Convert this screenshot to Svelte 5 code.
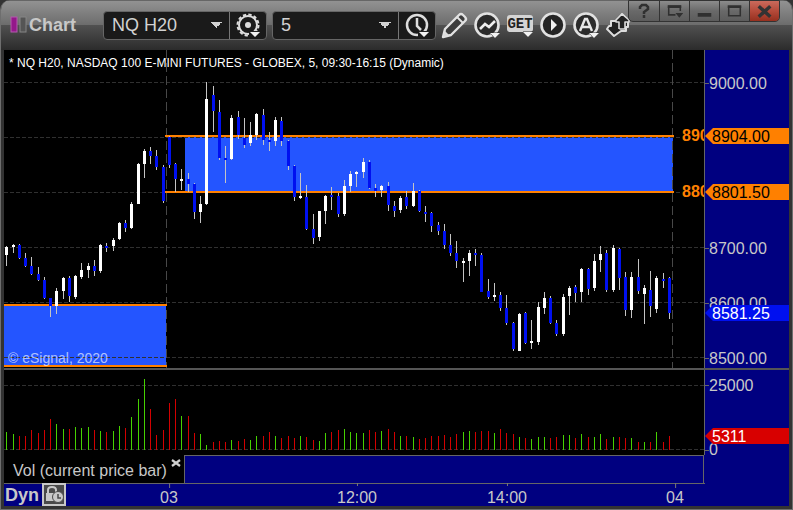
<script lang="ts">
    let symbol = $state("NQ H20");
    let interval = $state("5");
    let showVolume = $state(true);

    // high, low, body top, body bottom, closed up, volume
    const bars = [
        [246, 266, 247, 255, 1, 18], [244, 253, 245, 247, 1, 16], [244, 259, 245, 258, 0, 14],
        [253, 267, 258, 266, 0, 14], [257, 275, 266, 274, 0, 20], [267, 281, 274, 280, 0, 17],
        [277, 299, 280, 298, 0, 20], [298, 317, 298, 306, 0, 31], [288, 314, 291, 306, 1, 26],
        [277, 299, 278, 291, 1, 21], [276, 302, 278, 296, 0, 21], [275, 299, 276, 297, 1, 23],
        [263, 279, 270, 277, 1, 22], [263, 278, 266, 270, 1, 23], [260, 276, 266, 271, 0, 20],
        [244, 273, 245, 271, 1, 19], [243, 252, 246, 248, 0, 18], [238, 251, 240, 246, 1, 19],
        [222, 240, 223, 239, 1, 24], [220, 232, 223, 228, 0, 22], [202, 229, 204, 228, 1, 33],
        [163, 204, 164, 204, 1, 51], [149, 178, 151, 164, 1, 71], [147, 164, 151, 156, 0, 41],
        [150, 170, 156, 167, 0, 15], [165, 203, 167, 201, 0, 20], [136, 168, 137, 165, 0, 47],
        [163, 192, 164, 179, 0, 51], [169, 190, 179, 181, 1, 34], [173, 192, 179, 184, 0, 34],
        [183, 219, 184, 212, 0, 17], [196, 223, 204, 212, 1, 16], [82, 205, 99, 204, 1, 5],
        [86, 132, 95, 111, 0, 8], [100, 160, 112, 158, 0, 9], [146, 183, 158, 160, 0, 8],
        [115, 160, 118, 159, 1, 10], [111, 139, 117, 135, 0, 9], [118, 148, 138, 145, 0, 11],
        [122, 146, 135, 143, 1, 10], [113, 140, 114, 135, 1, 14], [109, 145, 115, 140, 0, 14],
        [132, 151, 140, 142, 0, 18], [117, 146, 120, 141, 1, 14], [117, 146, 121, 141, 0, 12],
        [140, 170, 141, 166, 0, 14], [165, 201, 166, 197, 0, 12], [173, 199, 196, 198, 1, 14],
        [185, 230, 197, 229, 0, 13], [214, 244, 229, 238, 0, 10], [211, 241, 211, 237, 1, 9],
        [195, 224, 196, 211, 1, 17], [187, 210, 195, 197, 0, 18], [193, 217, 196, 214, 0, 20],
        [180, 216, 186, 214, 1, 21], [171, 192, 174, 186, 1, 18], [171, 187, 172, 174, 1, 17],
        [158, 178, 162, 172, 1, 17], [160, 189, 162, 188, 0, 20], [184, 197, 188, 191, 0, 18],
        [185, 197, 186, 190, 1, 19], [182, 211, 186, 205, 0, 21], [201, 217, 206, 211, 0, 18],
        [196, 213, 198, 210, 1, 14], [191, 209, 197, 206, 0, 14], [183, 207, 191, 206, 1, 13],
        [190, 212, 191, 211, 0, 11], [206, 222, 212, 214, 0, 12], [212, 232, 213, 226, 0, 14],
        [222, 235, 225, 231, 0, 14], [224, 249, 231, 245, 0, 15], [234, 256, 245, 253, 0, 13],
        [241, 268, 253, 261, 0, 16], [258, 282, 261, 263, 1, 18], [250, 276, 253, 261, 1, 19],
        [249, 266, 253, 255, 0, 18], [253, 292, 255, 292, 0, 19], [279, 299, 291, 297, 0, 19],
        [283, 301, 295, 297, 1, 17], [292, 311, 295, 308, 0, 21], [295, 325, 308, 323, 0, 17],
        [322, 351, 323, 349, 0, 16], [313, 351, 314, 351, 1, 13], [312, 344, 313, 343, 0, 12],
        [320, 349, 341, 343, 1, 11], [302, 345, 307, 342, 1, 13], [292, 314, 298, 308, 1, 13],
        [296, 324, 298, 323, 0, 12], [320, 336, 323, 334, 0, 13], [294, 336, 297, 334, 1, 15],
        [286, 315, 288, 296, 1, 15], [285, 302, 287, 293, 0, 12], [268, 302, 269, 292, 1, 16],
        [268, 295, 269, 289, 0, 13], [254, 291, 261, 288, 1, 13], [246, 272, 254, 260, 1, 16],
        [250, 292, 253, 290, 0, 11], [245, 292, 248, 290, 1, 13], [248, 290, 249, 278, 0, 13],
        [272, 316, 277, 310, 0, 12], [272, 318, 277, 310, 1, 12], [259, 294, 277, 291, 0, 8],
        [285, 324, 288, 294, 1, 8], [271, 317, 290, 306, 0, 8], [276, 313, 278, 309, 1, 18],
        [273, 288, 279, 281, 0, 8], [277, 319, 278, 313, 0, 14],
    ].map(([high, low, top, bottom, up, volume], i) => ({
        x: Math.floor(6.75 + i * 6.25),
        high, low, top, bottom, up: up === 1, volume,
    }));

    const gridRows = [82, 137, 192, 247, 302, 357];
    const sessions = [166, 672];
    const prices = [
        { y: 82, text: "9000.00" },
        { y: 247, text: "8700.00" },
        { y: 302, text: "8600.00" },
        { y: 357, text: "8500.00" },
    ];
    const flags = [
        { y: 128, text: "8904.00", kind: "level" },
        { y: 184, text: "8801.50", kind: "level" },
        { y: 305, text: "8581.25", kind: "last" },
    ];
    const times = [
        { at: 165, text: "03", day: true },
        { at: 353, text: "12:00", day: false },
        { at: 503, text: "14:00", day: false },
        { at: 671, text: "04", day: true },
    ];
</script>

{#snippet flag(y: number, text: string, kind: string)}
    <path class="flag {kind}" d="M0 {y + 8}L8 {y}H84V{y + 16}H8Z" />
    <text class="flag-text {kind}" x="7" y={y + 14}>{text}</text>
{/snippet}

{#snippet drop(x: number, y: number)}
    <path d="M{x} {y}h10l-5 5z" fill="#f2f2f2" stroke="#2a2a2a" stroke-width="1" paint-order="stroke" />
{/snippet}

<main class="window">
    <header>
        <div class="brand">
            <svg width="17" height="18" viewBox="0 0 17 18">
                <rect x="1" y="1" width="6" height="15" fill="#94188a" stroke="#b45aae" />
                <rect x="10" y="1" width="6" height="15" fill="#555" stroke="#858585" />
            </svg>
            <h1>Chart</h1>
        </div>

        <div class="combo">
            <select aria-label="Symbol" bind:value={symbol}>
                <option>NQ H20</option>
                <option>ES H20</option>
            </select>
            <button aria-label="Symbol settings">
                <svg width="36" height="26" viewBox="0 0 36 26">
                    <circle cx="18" cy="13" r="9" fill="none" stroke="#ddd" stroke-width="2" />
                    <circle cx="18" cy="13" r="10.5" fill="none" stroke="#ddd" stroke-width="2" stroke-dasharray="3.3 2.2" />
                    <circle cx="18" cy="13" r="3" fill="#ddd" />
                    <path d="M19 19h11v7H19z" fill="#1a1a1a" />
                    {@render drop(20, 20)}
                </svg>
            </button>
        </div>

        <div class="combo">
            <select aria-label="Interval" bind:value={interval}>
                <option>5</option>
                <option>15</option>
            </select>
            <button aria-label="Time template">
                <svg width="36" height="26" viewBox="0 0 36 26">
                    <circle cx="18" cy="13" r="10" fill="none" stroke="#ddd" stroke-width="2.5" />
                    <path d="M18 6v8l4 4" fill="none" stroke="#ddd" stroke-width="2.5" />
                    <path d="M19 19h11v7H19z" fill="#1a1a1a" />
                    {@render drop(20, 20)}
                </svg>
            </button>
        </div>

        <nav class="tools" aria-label="Chart tools">
            <button aria-label="Line tools">
                <svg width="33" height="30" viewBox="0 0 33 30">
                    <path d="M5 27l2-8L21 5q2-2 4 0l2 2q2 2 0 4L13 25z" fill="#3c3c3c" stroke="#e2e2e2" stroke-width="2.4" stroke-linejoin="round" />
                    <path d="M19 7l6 6" stroke="#e2e2e2" stroke-width="2" />
                    <path d="M7 21l4 4-6 2z" fill="#ddd" />
                </svg>
            </button>
            <button aria-label="Studies">
                <svg width="33" height="30" viewBox="0 0 33 30">
                    <circle cx="16" cy="15" r="11.5" fill="#2b2b2b" stroke="#e2e2e2" stroke-width="2.6" />
                    <path d="M9 19l5-5 4 3 6-6" fill="none" stroke="#eee" stroke-width="2.6" />
                    {@render drop(19, 23)}
                </svg>
            </button>
            <button aria-label="Get studies">
                <svg width="33" height="30" viewBox="0 0 33 30">
                    <rect x="3" y="5" width="26" height="17" rx="3" fill="#d4d4d4" />
                    <text x="16" y="18" text-anchor="middle" class="get">GET</text>
                    {@render drop(19, 22)}
                </svg>
            </button>
            <button aria-label="Playback">
                <svg width="33" height="30" viewBox="0 0 33 30">
                    <circle cx="16" cy="15" r="11.5" fill="#252525" stroke="#e2e2e2" stroke-width="2.6" />
                    <path d="M14 9l6 6-6 6z" fill="#f2f2f2" />
                </svg>
            </button>
            <button aria-label="Alerts">
                <svg width="33" height="30" viewBox="0 0 33 30">
                    <circle cx="16" cy="15" r="11.5" fill="#2b2b2b" stroke="#e2e2e2" stroke-width="2.6" />
                    <path d="M10 21L15 9h2l5 12M12 17h8" fill="none" stroke="#e8e8e8" stroke-width="2.4" />
                    {@render drop(19, 23)}
                </svg>
            </button>
            <button aria-label="Link">
                <svg width="33" height="30" viewBox="0 0 33 30">
                    <g fill="#222" stroke="#dcdcdc" stroke-width="2" stroke-linejoin="round">
                        <path d="M11 26l-7-7 2-3h2v-5h6l5-7 6 6v7h-2v4h-5z" />
                        <path d="M19 4l-6 6v2h3v7h6v-7h4v-2z" stroke-width="1.6" />
                    </g>
                    <path d="M9 13h4v6h4l-6 5-5-6h3z" fill="#222" />
                </svg>
            </button>
        </nav>

        <div class="controls">
            <button aria-label="Help"><svg width="30" height="20" viewBox="0 0 30 20">
                <path d="M11 8V6l2-2h4l2 2v2l-4 3v2M15 14v3" fill="none" stroke="#303030" stroke-width="2.5" />
            </svg></button>
            <button aria-label="Window menu"><svg width="30" height="20" viewBox="0 0 30 20">
                <path d="M16 14H9V5h12v5" fill="none" stroke="#303030" stroke-width="1.6" />
                <path d="M8 4h14v3H8zM16 12h8l-4 5z" fill="#303030" />
            </svg></button>
            <button aria-label="Minimize"><svg width="30" height="20" viewBox="0 0 30 20">
                <path d="M8 12h14v4H8z" fill="#303030" />
            </svg></button>
            <button aria-label="Maximize"><svg width="30" height="20" viewBox="0 0 30 20">
                <path d="M9 6h12v9H9z" fill="none" stroke="#303030" stroke-width="1.6" />
                <path d="M8 4h14v3H8z" fill="#303030" />
            </svg></button>
            <button class="close" aria-label="Close"><svg width="30" height="20" viewBox="0 0 30 20">
                <path d="M9 5l12 11M21 5L9 16" fill="none" stroke="#333" stroke-width="3.6" />
            </svg></button>
        </div>
    </header>

    <section class="pane">
        <div class="plot">
            <svg height="318" viewBox="4 50 700 318" preserveAspectRatio="none" shape-rendering="crispEdges">
                <rect x="185" y="137" width="488" height="54" fill="#2455ff" />
                <rect x="4" y="306" width="162" height="59" fill="#2455ff" />
                {#each gridRows as y}
                    <path class="grid" d="M4 {y + 0.5}H704" />
                {/each}
                {#each sessions as x}
                    <path class="session" d="M{x + 0.5} 50V368" />
                {/each}
                <path fill="#ff8000" d="M165 135h509v2H165zM165 191h509v2H165zM4 304h163v2H4zM4 365h163v2H4z" />
                {#each bars as bar}
                    <rect x={bar.x} y={bar.high} width="1" height={bar.low - bar.high} fill="#c4c4c4" />
                    <rect x={bar.x - 1} y={bar.top} width="3" height={bar.bottom - bar.top} fill={bar.up ? "#fff" : "#0010f0"} />
                {/each}
            </svg>
            <p class="caption">* NQ H20, NASDAQ 100 E-MINI FUTURES - GLOBEX, 5, 09:30-16:15 (Dynamic)</p>
            <span class="level-name upper">8904.00</span>
            <span class="level-name lower">8801.50</span>
            <small>© eSignal, 2020</small>
        </div>
        <svg class="axis" width="84" height="318" viewBox="0 50 84 318">
            {#each prices as price}
                <path d="M0 {price.y + 1.5}h4" stroke="#666" />
                <text x="4" y={price.y + 7}>{price.text}</text>
            {/each}
            {#each flags as f}
                {@render flag(f.y, f.text, f.kind)}
            {/each}
        </svg>
    </section>

    <section class="pane volume">
        <div class="plot">
            <svg height="85" viewBox="4 370 700 85" preserveAspectRatio="none" shape-rendering="crispEdges">
                <path class="grid" d="M4 385.5H704M4 449.5H704" />
                {#if showVolume}
                    {#each bars as bar}
                        <rect x={bar.x} y={450 - bar.volume} width="1" height={bar.volume} fill={bar.up ? "#46d200" : "#d20000"} />
                    {/each}
                {/if}
            </svg>
        </div>
        <svg class="axis" width="84" height="85" viewBox="0 370 84 85">
            <path d="M0 385.5h4M0 450.5h4" stroke="#666" />
            <text x="4" y="391">25000</text>
            <text x="4" y="455">0</text>
            {@render flag(428, "5311", "sold")}
        </svg>
    </section>

    <div class="tabs">
        <div class="tab">
            <span>Vol (current price bar)</span>
            <button aria-label="Remove volume" onclick={() => (showVolume = false)}>
                <svg width="10" height="8" viewBox="0 0 10 8">
                    <path d="M1 1l8 6M9 1L1 7" stroke="#d0d0d0" stroke-width="2.2" />
                </svg>
            </button>
        </div>
        <div class="tab-rest"></div>
    </div>

    <footer>
        <strong>Dyn</strong>
        <button aria-label="Lock time range">
            <svg width="20" height="19" viewBox="0 0 20 19">
                <path d="M4 9V5q0-3 4-3t4 3v3" fill="none" stroke="#c8c8c8" stroke-width="2" />
                <path d="M2 8h10v8H2z" fill="#c8c8c8" />
                <circle cx="14" cy="12" r="5.5" fill="#c8c8c8" stroke="#4a4a4a" />
                <path d="M14 9v4h3" fill="none" stroke="#4a4a4a" stroke-width="1.5" />
            </svg>
        </button>
        <div class="times">
            {#each times as time}
                <span class:day={time.day} style="left: {time.at / 7}%">{time.text}</span>
            {/each}
        </div>
    </footer>
</main>

<style>
    :global(body) {
        margin: 0;
        background: #333;
    }
    .window {
        box-sizing: border-box;
        min-height: 100vh;
        border: 1px solid #6e6e6e;
        border-top: none;
        border-radius: 10px 10px 0 0;
        padding: 0 3px 3px;
        background: #333;
        color: #c8c8c8;
        font: 16px/20px "Liberation Sans", Arial, sans-serif;
        overflow: hidden;
    }
    button {
        display: flex;
        align-items: center;
        justify-content: center;
        margin: 0;
        border: none;
        padding: 0;
        background: none;
        cursor: pointer;
    }
    header {
        position: relative;
        display: flex;
        align-items: center;
        box-sizing: border-box;
        height: 50px;
        margin: 0 -3px;
        border-top: 1px solid #666;
        padding: 0 0 1px 9px;
        background: linear-gradient(#929292, #6c6c6c 49%, #505050 50%, #2b2b2b);
    }
    .brand {
        display: flex;
        align-items: center;
        gap: 2px;
        width: 93px;
    }
    h1 {
        margin: 0;
        font-size: 18px;
        line-height: 20px;
    }
    .combo {
        display: flex;
        box-sizing: border-box;
        width: 164px;
        height: 29px;
        margin-right: 5px;
        border: 1px solid #666;
        border-radius: 4px;
        background: #1a1a1a;
    }
    select {
        flex: 1;
        min-width: 0;
        appearance: none;
        border: none;
        border-right: 1px solid #777;
        padding: 0 8px;
        color: #d2d2d2;
        font: 18px/24px "Liberation Sans", Arial, sans-serif;
        background: linear-gradient(to bottom right, #d2d2d2 50%, transparent 50%) right 7px center / 6px 6px no-repeat,
            linear-gradient(to bottom left, #d2d2d2 50%, transparent 50%) right 13px center / 6px 6px no-repeat;
    }
    .tools {
        display: flex;
        margin-left: -3px;
    }
    .get {
        fill: #222;
        font: bold 14px "Liberation Mono", monospace;
    }
    .controls {
        position: absolute;
        top: -1px;
        right: 12px;
        display: flex;
        border: 1px solid #333;
        border-radius: 0 0 5px 5px;
        background: linear-gradient(#8c8c8c, #696969 50%, #5c5c5c);
        overflow: hidden;
    }
    .controls button + button {
        box-sizing: border-box;
        width: 30px;
        border-left: 1px solid #333;
    }
    .controls .close {
        background: linear-gradient(#ca6a5c, #b54a3a 50%, #96301f);
    }
    .pane {
        display: flex;
        border-bottom: 2px solid #555;
        background: #000;
    }
    .pane.volume {
        border-bottom: none;
    }
    .plot {
        position: relative;
        flex: 1;
        min-width: 0;
        overflow: hidden;
    }
    .plot svg {
        display: block;
        width: 100%;
    }
    .grid {
        stroke: #303030;
        stroke-dasharray: 4 2;
    }
    .session {
        stroke: #484848;
        stroke-dasharray: 9 4;
    }
    .axis {
        display: block;
        flex: none;
        border-left: 1px solid #666;
        background: #000080;
        overflow: visible;
    }
    .axis text {
        fill: #c8c8c8;
    }
    .flag.level {
        fill: #ff8000;
    }
    .flag.last {
        fill: #0010f0;
    }
    .flag.sold {
        fill: #d80000;
    }
    .axis .flag-text {
        fill: #fff;
    }
    .axis .flag-text.level {
        fill: #000;
    }
    .caption {
        position: absolute;
        top: 5px;
        left: 5px;
        margin: 0;
        color: #fff;
        font-size: 12px;
        line-height: 16px;
        white-space: nowrap;
    }
    .level-name {
        position: absolute;
        left: calc(100% - 24px);
        padding-left: 2px;
        color: #ff8000;
        background: #000;
        font-weight: bold;
        line-height: 16px;
    }
    .upper {
        top: 78px;
    }
    .lower {
        top: 134px;
    }
    small {
        position: absolute;
        bottom: 2px;
        left: 4px;
        color: rgba(255, 255, 255, 0.65);
        font-size: 14px;
        line-height: 16px;
    }
    .tabs {
        display: flex;
        border-right: 85px solid #000080;
    }
    .tab {
        display: flex;
        align-items: flex-start;
        gap: 4px;
        padding: 4px 3px 0 9px;
        background: #000;
        line-height: 24px;
        white-space: nowrap;
    }
    .tab-rest {
        flex: 1;
        border: 1px solid #666;
        border-bottom: none;
        background: #000080;
    }
    footer {
        display: flex;
        align-items: center;
        position: relative;
        height: 23px;
        background: linear-gradient(#666, #666) left top / calc(100% - 84px) 1px no-repeat #000080;
    }
    footer strong {
        margin-left: 1px;
        font-size: 18px;
    }
    footer button {
        box-sizing: border-box;
        width: 24px;
        height: 23px;
        margin-left: 3px;
        border: 2px solid #c8c8c8;
        background: #4a4a4a;
    }
    .times {
        position: absolute;
        inset: 0 85px 0 0;
        pointer-events: none;
    }
    .times span {
        position: absolute;
        top: 5px;
        transform: translateX(-50%);
    }
    .times span::before {
        content: "";
        position: absolute;
        top: -5px;
        left: 50%;
        width: 1px;
        height: 3px;
        background: #777;
    }
    .times .day::before {
        height: 5px;
    }
</style>
